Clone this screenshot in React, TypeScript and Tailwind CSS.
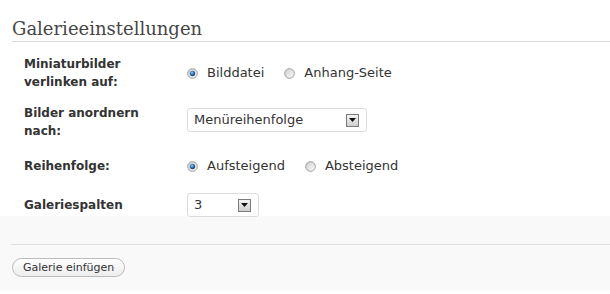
import React from "react";

const Radio = ({ checked }: { checked?: boolean }) => (
  <svg width="11" height="11" viewBox="0 0 11 11" className="shrink-0">
    <defs>
      <linearGradient id="ring" x1="0" y1="0" x2="1" y2="1">
        <stop offset="0" stopColor="#cbcbcb" />
        <stop offset="1" stopColor="#ffffff" />
      </linearGradient>
      <radialGradient id="dot" cx="0.4" cy="0.35" r="0.7">
        <stop offset="0" stopColor="#a5cbec" />
        <stop offset="0.55" stopColor="#2c6aa3" />
        <stop offset="1" stopColor="#1a3f66" />
      </radialGradient>
    </defs>
    <circle cx="5.5" cy="5.5" r="4.8" fill="url(#ring)" stroke="#9c9c9c" strokeWidth="1" />
    {checked && <circle cx="5.5" cy="5.5" r="2.7" fill="url(#dot)" />}
  </svg>
);

const Arrow = () => (
  <div className="flex h-[13px] w-[13px] items-center justify-center border border-[#7b7b7b] bg-gradient-to-b from-[#f4f4f4] to-[#cfcfcf]">
    <svg width="7" height="4" viewBox="0 0 7 4">
      <path d="M0 0h7L3.5 4z" fill="#111" />
    </svg>
  </div>
);

const Select = ({ value, width }: { value: string; width: string }) => (
  <div className={`flex h-[24px] items-center justify-between rounded-[3px] border border-[#dcdcdc] bg-white pl-[6px] pr-[7px] ${width}`}>
    <span>{value}</span>
    <Arrow />
  </div>
);

const Option = ({ label, checked }: { label: string; checked?: boolean }) => (
  <label className="flex items-center gap-[9px]">
    <Radio checked={checked} />
    <span>{label}</span>
  </label>
);

export default function App() {
  return (
    <div className="h-[294px] w-[610px] overflow-hidden bg-white text-[13px] leading-[18px] text-[#333]" style={{ fontFamily: '"DejaVu Sans", Verdana, sans-serif' }}>
      <div className="h-[216px]">
        <div className="pl-3 pt-[16px]">
          <h3 className="border-b border-[#d8d8d8] text-[18px] leading-[25px] text-[#464646]" style={{ fontFamily: '"DejaVu Serif", Georgia, serif' }}>
            Galerieeinstellungen
          </h3>
        </div>

        <div className="pl-[24px]">
          <div className="mt-[13px] flex">
            <div className="w-[163px] text-[12px] font-bold">
              Miniaturbilder
              <br />
              verlinken auf:
            </div>
            <div className="flex h-[36px] items-center gap-[20px]">
              <Option label="Bilddatei" checked />
              <Option label="Anhang-Seite" />
            </div>
          </div>

          <div className="mt-[13px] flex">
            <div className="w-[163px] text-[12px] font-bold">
              Bilder anordnern
              <br />
              nach:
            </div>
            <div className="pt-[4px]">
              <Select value="Menüreihenfolge" width="w-[180px]" />
            </div>
          </div>

          <div className="mt-[17px] flex">
            <div className="w-[163px] text-[12px] font-bold">Reihenfolge:</div>
            <div className="flex h-[18px] items-center gap-[20px]">
              <Option label="Aufsteigend" checked />
              <Option label="Absteigend" />
            </div>
          </div>

          <div className="mt-[18px] flex items-center">
            <div className="w-[163px] text-[12px] font-bold">Galeriespalten</div>
            <Select value="3" width="w-[72px]" />
          </div>
        </div>
      </div>

      <div className="h-[75px] bg-[#f9f9f9] pt-[28px]">
        <div className="ml-[11px] border-t border-[#dfdfdf]" />
        <div className="pl-[12px] pt-[13px]">
          <button className="h-[19px] rounded-full border border-[#bbb] bg-gradient-to-b from-white to-[#ededed] px-[10px] text-[11px] leading-[17px] text-[#333]">
            Galerie einfügen
          </button>
        </div>
      </div>
    </div>
  );
}
